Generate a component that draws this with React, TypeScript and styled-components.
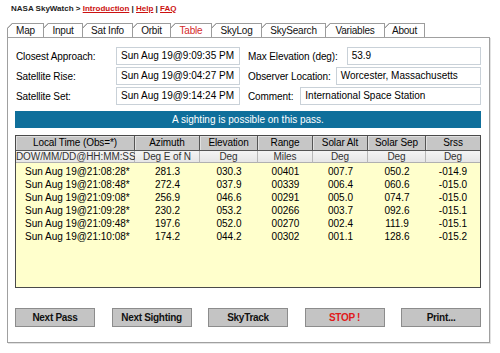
import React from "react";
import styled, { createGlobalStyle } from "styled-components";

const GlobalStyle = createGlobalStyle`
  html, body { margin: 0; padding: 0; background: #ffffff; }
  body { font-family: "Liberation Sans", Arial, sans-serif; color: #000; }
`;

const Page = styled.div`
  width: 500px;
  height: 353px;
  padding-left: 7px;
  box-sizing: border-box;
  overflow: hidden;
`;

const TopBar = styled.div`
  height: 16px;
  display: flex;
  align-items: center;
  padding-left: 4px;
  font-size: 8px;
  color: #222;
  white-space: pre;
`;

const Crumb = styled.span`
  font-weight: bold;
`;

const TopLink = styled.a`
  color: #cc1111;
  font-weight: bold;
  text-decoration: underline;
`;

const TabRow = styled.div`
  margin-top: 7px;
  display: flex;
  height: 14px;
`;

const Tab = styled.div<{ $w: number; $active?: boolean }>`
  width: ${(p) => p.$w}px;
  height: 14px;
  box-sizing: border-box;
  border: 1px solid #9c9c9c;
  border-bottom: none;
  margin-left: -1px;
  &:first-child { margin-left: 0; }
  clip-path: polygon(5px 0, 100% 0, 100% 100%, 0 100%, 0 5px);
  background: linear-gradient(135deg, transparent 0 3.3px, #9c9c9c 3.3px 4.3px, #ffffff 4.3px);
  background-origin: border-box;
  font-size: 10px;
  line-height: 13px;
  text-align: center;
  letter-spacing: -0.2px;
  color: ${(p) => (p.$active ? "#d42a2a" : "#111")};
`;

const Panel = styled.div`
  width: 483px;
  height: 306px;
  box-sizing: border-box;
  border: 1px solid #a0a0a0;
  box-shadow: 1px 1px 0 #e2e2e2;
  padding: 9px 8px 0 7px;
  display: flex;
  flex-direction: column;
`;

const InfoRows = styled.div`
  display: flex;
  flex-direction: column;
  gap: 2px;
`;

const InfoRow = styled.div`
  display: flex;
  align-items: center;
  height: 18px;
`;

const LeftLabel = styled.div`
  width: 101px;
  padding-left: 1px;
  box-sizing: border-box;
  font-size: 10px;
  letter-spacing: -0.1px;
`;

const RightLabel = styled.div`
  margin-left: 8px;
  font-size: 10px;
  letter-spacing: -0.1px;
  white-space: nowrap;
`;

const Field = styled.div<{ $w?: number; $ml?: number }>`
  ${(p) => (p.$w ? `width: ${p.$w}px;` : "flex: 1;")}
  margin-left: ${(p) => p.$ml ?? 0}px;
  height: 18px;
  box-sizing: border-box;
  border: 1px solid #c9d1d8;
  background: #fff;
  padding-left: 4px;
  font-size: 10px;
  line-height: 16px;
  white-space: nowrap;
  overflow: hidden;
`;

const Banner = styled.div`
  margin-top: 6px;
  height: 17px;
  background: #0f6f9b;
  color: #fff;
  font-size: 10px;
  line-height: 17px;
  text-align: center;
`;

const Table = styled.div`
  margin-top: 7px;
  width: 466px;
  height: 153px;
  box-sizing: border-box;
  border: 1px solid #4a4a4a;
  background: #ffffcc;
  display: flex;
  flex-direction: column;
`;

const COLS = "119px 65px 58px 55px 55px 58px 54px";

const HeadRow = styled.div`
  display: grid;
  grid-template-columns: ${COLS};
  height: 15px;
`;

const HeadCell = styled.div`
  background: #c6c6c6;
  border-right: 1px solid #555;
  border-bottom: 1px solid #555;
  box-shadow: inset 1px 1px 0 #e0e0e0;
  font-size: 10px;
  line-height: 14px;
  text-align: center;
  letter-spacing: -0.1px;
  &:last-child { border-right: none; }
`;

const SubRow = styled.div`
  display: grid;
  grid-template-columns: ${COLS};
  height: 12px;
`;

const SubCell = styled.div`
  background: linear-gradient(#f4f4f4, #e6e6e6);
  border-right: 1px solid #b8b8b8;
  border-bottom: 1px solid #b0b0b0;
  font-size: 10px;
  line-height: 11px;
  color: #333;
  text-align: center;
  letter-spacing: -0.1px;
  &:last-child { border-right: none; }
`;

const Body = styled.div`
  padding-top: 2px;
`;

const DataRow = styled.div`
  display: grid;
  grid-template-columns: ${COLS};
  height: 13px;
`;

const DataCell = styled.div<{ $left?: boolean }>`
  font-size: 10px;
  line-height: 13px;
  text-align: ${(p) => (p.$left ? "left" : "center")};
  padding-left: ${(p) => (p.$left ? "9px" : "0")};
  white-space: nowrap;
`;

const ButtonRow = styled.div`
  margin-top: 20px;
  width: 466px;
  display: flex;
  justify-content: space-between;
`;

const Button = styled.button<{ $danger?: boolean }>`
  width: 80px;
  height: 19px;
  box-sizing: border-box;
  border: 1px solid #8c8c8c;
  background: #c4c4c4;
  font-family: "Liberation Sans", Arial, sans-serif;
  font-weight: bold;
  font-size: 10px;
  letter-spacing: -0.3px;
  padding: 0;
  color: ${(p) => (p.$danger ? "#e01a1a" : "#111")};
`;

const tabs: [string, number][] = [
  ["Map", 37],
  ["Input", 40],
  ["Sat Info", 51],
  ["Orbit", 39],
  ["Table", 42],
  ["SkyLog", 51],
  ["SkySearch", 65],
  ["Variables", 60],
  ["About", 41],
];

const heads = ["Local Time (Obs=*)", "Azimuth", "Elevation", "Range", "Solar Alt", "Solar Sep", "Srss"];
const units = ["DOW/MM/DD@HH:MM:SS", "Deg E of N", "Deg", "Miles", "Deg", "Deg", "Deg"];
const rows = [
  ["Sun Aug 19@21:08:28*", "281.3", "030.3", "00401", "007.7", "050.2", "-014.9"],
  ["Sun Aug 19@21:08:48*", "272.4", "037.9", "00339", "006.4", "060.6", "-015.0"],
  ["Sun Aug 19@21:09:08*", "256.9", "046.6", "00291", "005.0", "074.7", "-015.0"],
  ["Sun Aug 19@21:09:28*", "230.2", "053.2", "00266", "003.7", "092.6", "-015.1"],
  ["Sun Aug 19@21:09:48*", "197.6", "052.0", "00270", "002.4", "111.9", "-015.1"],
  ["Sun Aug 19@21:10:08*", "174.2", "044.2", "00302", "001.1", "128.6", "-015.2"],
];

const info: [string, string, string, string, number][] = [
  ["Closest Approach:", "Sun Aug 19@9:09:35 PM", "Max Elevation (deg):", "53.9", 9],
  ["Satellite Rise:", "Sun Aug 19@9:04:27 PM", "Observer Location:", "Worcester, Massachusetts", 5],
  ["Satellite Set:", "Sun Aug 19@9:14:24 PM", "Comment:", "International Space Station", 7],
];

export default function App() {
  return (
    <>
      <GlobalStyle />
      <Page>
        <TopBar>
          <Crumb>NASA SkyWatch &gt; </Crumb>
          <TopLink>Introduction</TopLink>
          <Crumb> | </Crumb>
          <TopLink>Help</TopLink>
          <Crumb> | </Crumb>
          <TopLink>FAQ</TopLink>
        </TopBar>
        <TabRow>
          {tabs.map(([t, w]) => (
            <Tab key={t} $w={w} $active={t === "Table"}>
              {t}
            </Tab>
          ))}
        </TabRow>
        <Panel>
          <InfoRows>
            {info.map(([l, v, rl, rv, ml]) => (
              <InfoRow key={l}>
                <LeftLabel>{l}</LeftLabel>
                <Field $w={124}>{v}</Field>
                <RightLabel>{rl}</RightLabel>
                <Field $ml={ml}>{rv}</Field>
              </InfoRow>
            ))}
          </InfoRows>
          <Banner>A sighting is possible on this pass.</Banner>
          <Table>
            <HeadRow>
              {heads.map((h) => (
                <HeadCell key={h}>{h}</HeadCell>
              ))}
            </HeadRow>
            <SubRow>
              {units.map((u, i) => (
                <SubCell key={i}>{u}</SubCell>
              ))}
            </SubRow>
            <Body>
              {rows.map((r) => (
                <DataRow key={r[0]}>
                  {r.map((c, i) => (
                    <DataCell key={i} $left={i === 0}>
                      {c}
                    </DataCell>
                  ))}
                </DataRow>
              ))}
            </Body>
          </Table>
          <ButtonRow>
            <Button>Next Pass</Button>
            <Button>Next Sighting</Button>
            <Button>SkyTrack</Button>
            <Button $danger>STOP !</Button>
            <Button>Print...</Button>
          </ButtonRow>
        </Panel>
      </Page>
    </>
  );
}
